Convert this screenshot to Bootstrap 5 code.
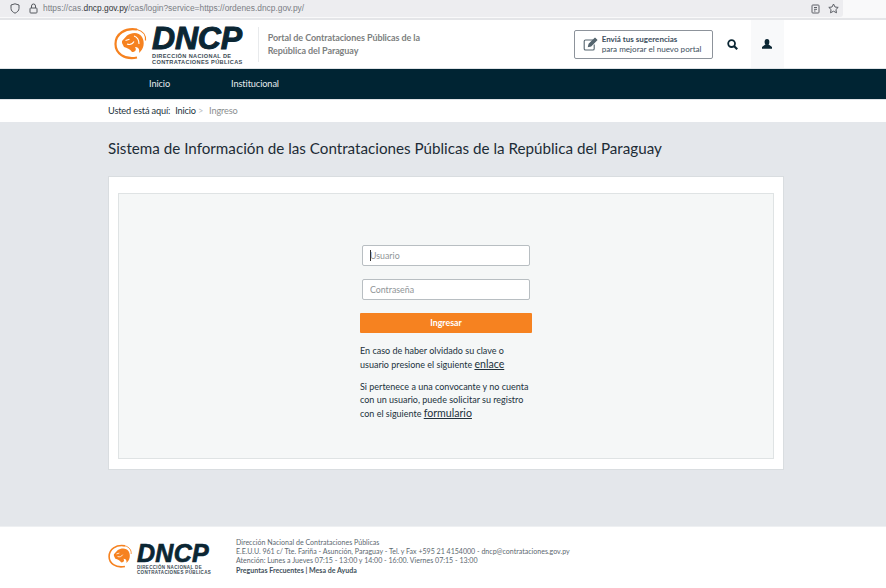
<!DOCTYPE html>
<html lang="es">
<head>
  <meta charset="UTF-8">
  <title>DNCP | Ingreso</title>
  <meta name="viewport" content="width=device-width, initial-scale=1">
  <link href="https://cdn.jsdelivr.net/npm/bootstrap@5.3.0/dist/css/bootstrap.min.css" rel="stylesheet">
  <style>
    html, body { height: 588px; overflow: hidden; }
    body { font-family: Lato, "Liberation Sans", sans-serif; background: #fff; color: #22323c; font-size: 10px; }
    /* barra del navegador */
    .browser-bar { height: 20px; border-bottom: 2px solid #e4e5e8; background: #f9f9fa; }
    .url-box { width: 843px; height: 17px; background: #ededf0; border-radius: 0 0 3px 0; padding-left: 10px; gap: 9px; }
    .url-text { font-family: "Liberation Sans", sans-serif; font-size: 8.4px; color: #7b7e85; margin-left: -4px; }
    .url-text b { color: #33363b; font-weight: 400; }
    .url-end { gap: 8px; padding-right: 4px; }
    /* cabecera */
    .top-head { height: 49px; border-bottom: 1px solid #dfe3e6; padding-left: 114px; }
    .logo-mark { width: 34px; height: 34px; flex: none; }
    .logo-block { padding-top: 3px; }
    .logo-name { font-family: "Liberation Sans", sans-serif; font-weight: 700; font-style: italic; color: #0b2633; font-size: 32px; line-height: 25px; letter-spacing: -.2px; -webkit-text-stroke: 1px #0b2633; }
    .logo-sub { font-family: "Liberation Sans", sans-serif; font-size: 5.6px; line-height: 6.3px; letter-spacing: .37px; color: #3c4b54; font-weight: 700; white-space: nowrap; margin-top: 2px; }
    .head-sep { width: 1px; height: 35px; background: #e8eaec; margin: 0 9px 0 15px; }
    .portal-name { font-size: 9px; line-height: 13px; letter-spacing: -.08px; font-weight: 700; color: #7d7f80; width: 170px; }
    .suggest-box { width: 139px; height: 29px; border: 1px solid #8d939b; border-radius: 2px; margin-left: 136px; padding-left: 8px; gap: 4px; text-decoration: none; color: #3e5060; font-size: 8.1px; line-height: 10.5px; }
    .suggest-box strong { font-size: 8px; display: block; }
    .search-btn { width: 38px; padding-left: 2px; }
    .user-btn { width: 33px; height: 48px; background: #f8f9fa; }
    /* menu */
    .main-menu { height: 31px; background: #002433; border-bottom: 1px solid #dfe3e6; padding-left: 149px; gap: 61px; }
    .main-menu a { color: #e6ebee; text-decoration: none; font-size: 9.2px; letter-spacing: -.1px; }
    .crumbs { height: 22px; padding-left: 108px; font-size: 9.2px; letter-spacing: -.15px; gap: 5px; color: #22323c; }
    .crumbs .crumb-off { color: #8b8e90; }
    .crumbs .crumb-sep { color: #b9bcbf; margin: 0 -3px 0 -3px; }
    /* contenido */
    .page-body { height: 404px; background: #e4e7eb; padding: 16px 102px 0 108px; }
    .page-title { font-size: 15.2px; line-height: 20px; font-weight: 400; color: #1d2c36; margin: 0 0 18px; }
    .outer-box { height: 294px; background: #fff; border: 1px solid #d9dde0; padding: 16px 9px 10px; }
    .inner-box { height: 100%; background: #f5f7f7; border: 1px solid #dfe3e4; padding-top: 51px; }
    .login-col { width: 172px; }
    .input-wrap { width: 168px; margin: 0 auto; }
    .input-wrap .form-control { height: 21px; margin-bottom: 13px; border-radius: 2px; border: 1px solid #b8bec2; font-size: 8.8px; padding: 0 7px; box-shadow: none; }
    .input-wrap .form-control::placeholder { color: #8f9497; }
    .text-caret { position: absolute; left: 8px; top: 5px; width: 1px; height: 11px; background: #333; }
    .btn-enter { width: 100%; height: 20px; padding: 0; background: #f68220; border: 0; border-radius: 1px; color: #fff; font-size: 8.8px; font-weight: 700; }
    .login-help { font-size: 9px; line-height: 13px; color: #22323c; margin: 0; }
    .help-first { margin-top: 11px; }
    .login-help a { color: #22323c; font-size: 10.6px; line-height: 15px; }
    /* pie */
    .foot-row { height: 62px; padding: 11px 0 0 108px; border-top: 1px solid #eef0f2; }
    .foot-logo { width: 128px; flex: none; }
    .foot-logo .logo-mark { width: 25px; height: 25px; margin-top: 6px; }
    .foot-logo .logo-block { padding-top: 6px; }
    .foot-logo .logo-name { font-size: 25px; line-height: 19px; letter-spacing: .3px; -webkit-text-stroke: .7px #0b2633; }
    .foot-logo .logo-sub { font-size: 4.5px; line-height: 5px; letter-spacing: .35px; margin-top: 2px; }
    .foot-text { font-size: 7.05px; line-height: 9.200px; color: #5c6870; white-space: nowrap; }
    .foot-text b { color: #42505a; }
  </style>
</head>
<body>

<!-- barra del navegador -->
<div class="browser-bar">
  <div class="url-box d-flex align-items-center">
    <svg width="10" height="11" viewBox="0 0 10 11" fill="none" stroke="#55585e" stroke-width="1"><path d="M5 .8 9 2v3.400c0 2.300-1.800 3.800-4 4.800C2.800 9.200 1 7.700 1 5.400V2z"/></svg>
    <svg width="9" height="11" viewBox="0 0 9 11" fill="none" stroke="#55585e" stroke-width="1"><rect x="1" y="5" width="7" height="5" rx=".8"/><path d="M2.500 5V3a2 2 0 0 1 4 0v2"/></svg>
    <span class="url-text">https://cas.<b>dncp.gov.py</b>/cas/login?service=https://ordenes.dncp.gov.py/</span>
    <div class="url-end d-flex align-items-center ms-auto">
      <svg width="9" height="10" viewBox="0 0 9 10" fill="none" stroke="#5c5f66" stroke-width="1"><rect x="1" y="1" width="7" height="8" rx=".8"/><path d="M3 3.500h3M3 5.300h3M3 7h1.500"/></svg>
      <svg width="11" height="11" viewBox="0 0 11 11" fill="none" stroke="#5c5f66" stroke-width="1"><path d="M5.500 1 7 4l3.200.4-2.300 2.200.6 3.200-3-1.600-3 1.600.6-3.200L.8 4.400 4 4z"/></svg>
    </div>
  </div>
</div>

<!-- cabecera -->
<div class="top-head d-flex align-items-center">
  <svg class="logo-mark" viewBox="0 0 34 34" fill="none">
    <path d="M23 2.500C11 .5 1.500 7 1.500 17 1.500 26 10 33 23 30.500" stroke="#f68220" stroke-width="2.200"/>
    <path d="M23 2.500c6 1.500 9 6 8.500 11" stroke="#f68220" stroke-width="1.200"/>
    <path d="M8 14 13 8.500C18 5 25 5 28 10c3 5 2 12-3 16 1-4-1-6-4-6 2 3 0 5-3 5-2-3-5-4-8-5l-2-4z" fill="#f68220"/>
    <path d="M11.500 13.500l4-1.200M13 17c3 1.200 5.500 0 7-2.500M20 9c3 1 5 4 5 8" stroke="#fff" stroke-width="1.100"/>
  </svg>
  <div class="logo-block ms-1">
    <div class="logo-name">DNCP</div>
    <div class="logo-sub">DIRECCIÓN NACIONAL DE<br>CONTRATACIONES PÚBLICAS</div>
  </div>
  <div class="head-sep"></div>
  <div class="portal-name">Portal de Contrataciones Públicas de la República del Paraguay</div>
  <a class="suggest-box d-flex align-items-center" href="#">
    <svg width="15" height="14" viewBox="0 0 15 14" fill="none" stroke="#55656f" stroke-width="1.100"><path d="M10 3H2.500A1.300 1.300 0 0 0 1.200 4.300v7.400A1.300 1.300 0 0 0 2.500 13h7.400a1.300 1.300 0 0 0 1.300-1.300V7.500"/><path d="M5.500 9.500l.6-2.400L12 1.200l1.800 1.800-5.900 5.900z" fill="#55656f"/></svg>
    <span><strong>Enviá tus sugerencias</strong>para mejorar el nuevo portal</span>
  </a>
  <div class="search-btn d-flex justify-content-center">
    <svg width="11" height="11" viewBox="0 0 11 11" fill="none" stroke="#0b2633" stroke-width="1.800"><circle cx="4.600" cy="4.600" r="3.400"/><path d="M7 7l3.200 3.200" stroke-width="2.200"/></svg>
  </div>
  <div class="user-btn d-flex align-items-center justify-content-center">
    <svg width="10" height="10" viewBox="0 0 10 10" fill="#0b2633"><ellipse cx="5" cy="3" rx="2.400" ry="2.900"/><path d="M3.600 5.200 0 8v1.800h10V8L6.400 5.200z"/></svg>
  </div>
</div>

<!-- menu -->
<div class="main-menu d-flex align-items-center">
  <a href="#">Inicio</a>
  <a href="#">Institucional</a>
</div>

<div class="crumbs d-flex align-items-center">
  <span>Usted está aquí:</span>
  <span>Inicio</span>
  <span class="crumb-sep">&gt;</span>
  <span class="crumb-off ms-1">Ingreso</span>
</div>

<!-- contenido -->
<div class="page-body">
  <h1 class="page-title">Sistema de Información de las Contrataciones Públicas de la República del Paraguay</h1>
  <div class="outer-box">
    <div class="inner-box d-flex justify-content-center">
      <div class="login-col">
        <form onsubmit="return false">
          <div class="input-wrap position-relative">
            <input type="text" class="form-control" placeholder="Usuario">
            <span class="text-caret"></span>
          </div>
          <div class="input-wrap">
            <input type="password" class="form-control" placeholder="Contraseña">
          </div>
          <button type="submit" class="btn btn-enter">Ingresar</button>
        </form>
        <p class="login-help help-first">En caso de haber olvidado su clave o usuario presione el siguiente <a href="#">enlace</a></p>
        <p class="login-help mt-2">Si pertenece a una convocante y no cuenta con un usuario, puede solicitar su registro con el siguiente <a href="#">formulario</a></p>
      </div>
    </div>
  </div>
</div>

<!-- pie -->
<div class="foot-row d-flex">
  <div class="foot-logo d-flex">
    <svg class="logo-mark" viewBox="0 0 34 34" fill="none">
      <path d="M23 2.500C11 .5 1.500 7 1.500 17 1.500 26 10 33 23 30.500" stroke="#f68220" stroke-width="2.200"/>
      <path d="M23 2.500c6 1.500 9 6 8.500 11" stroke="#f68220" stroke-width="1.200"/>
      <path d="M8 14 13 8.500C18 5 25 5 28 10c3 5 2 12-3 16 1-4-1-6-4-6 2 3 0 5-3 5-2-3-5-4-8-5l-2-4z" fill="#f68220"/>
      <path d="M11.500 13.500l4-1.200M13 17c3 1.200 5.500 0 7-2.500" stroke="#fff" stroke-width="1.100"/>
    </svg>
    <div class="logo-block ms-1">
      <div class="logo-name">DNCP</div>
      <div class="logo-sub">DIRECCIÓN NACIONAL DE<br>CONTRATACIONES PÚBLICAS</div>
    </div>
  </div>
  <div class="foot-text">
    Dirección Nacional de Contrataciones Públicas<br>
    E.E.U.U. 961 c/ Tte. Fariña - Asunción, Paraguay - Tel. y Fax +595 21 4154000 - dncp@contrataciones.gov.py<br>
    Atención: Lunes a Jueves 07:15 - 13:00 y 14:00 - 16:00. Viernes 07:15 - 13:00<br>
    <b>Preguntas Frecuentes | Mesa de Ayuda</b>
  </div>
</div>

<script src="https://cdn.jsdelivr.net/npm/bootstrap@5.3.0/dist/js/bootstrap.bundle.min.js"></script>
</body>
</html>
